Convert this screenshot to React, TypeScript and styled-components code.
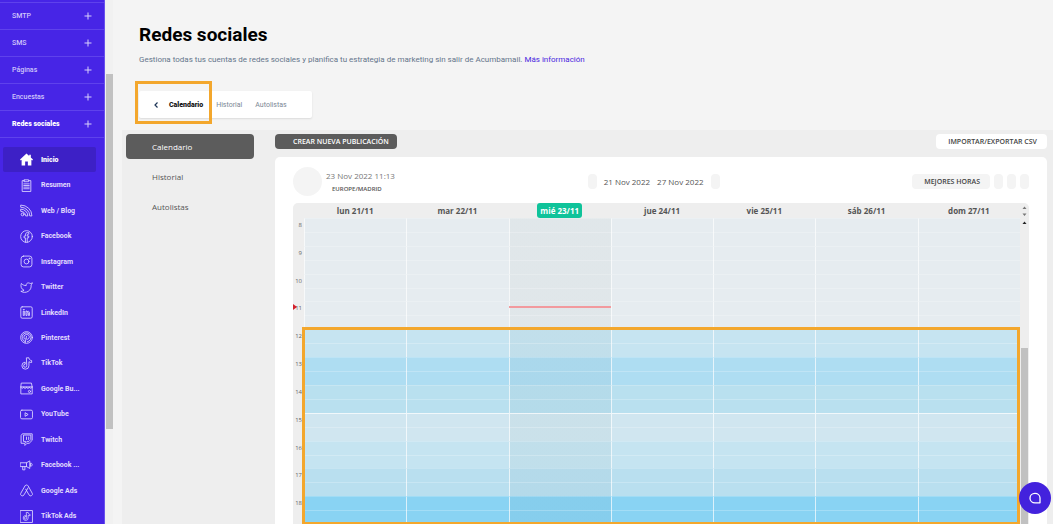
import React from "react";
import styled, { createGlobalStyle } from "styled-components";

const purple = "#4725e6";
const orange = "#f3a72d";
const uiFont = '"Open Sans", "Noto Sans", sans-serif';

const GlobalStyle = createGlobalStyle`
  * { box-sizing: border-box; }
  body { margin: 0; background: #f4f4f4; font-family: Roboto, sans-serif; }
  button { border: 0; margin: 0; padding: 0; font: inherit; cursor: pointer; }
  a { text-decoration: none; }
  ul, h1, p { margin: 0; padding: 0; list-style: none; }
`;

const Page = styled.div`
  display: flex;
  height: 100vh;
  overflow: hidden;
`;

/* ---------- sidebar ---------- */
const Sidebar = styled.nav`
  flex: 0 0 105px;
  background: ${purple};
  border-right: 1px solid #6a50ee;
  padding-top: 2px;
  overflow: hidden;
`;

const SectionButton = styled.button<{ $active?: boolean }>`
  display: flex;
  align-items: center;
  justify-content: space-between;
  width: 100%;
  height: 27px;
  padding: 0 12px;
  background: none;
  border-top: 1px solid #5f42ec;
  color: ${(p) => (p.$active ? "#fff" : "#cfc5fb")};
  font-size: 7px;
  font-weight: ${(p) => (p.$active ? 900 : 500)};
  svg { width: 8px; height: 8px; }
`;

const NetworkList = styled.ul`
  display: grid;
  grid-auto-rows: 1fr;
  height: 392px;
  padding: 9px 8px 0 3px;
  border-top: 1px solid #5f42ec;
`;

const NetworkLink = styled.a<{ $active?: boolean }>`
  display: flex;
  align-items: center;
  gap: 8px;
  height: 100%;
  padding-left: 17px;
  border-radius: 2px;
  background: ${(p) => (p.$active ? "#3d20c6" : "none")};
  color: ${(p) => (p.$active ? "#fff" : "#e2dcfd")};
  font-size: 7px;
  font-weight: ${(p) => (p.$active ? 900 : 700)};
  white-space: nowrap;
  svg { width: 13px; height: 13px; flex: none; }
`;

const PageScroll = styled.div`
  flex: 0 0 8px;
  display: flex;
  flex-direction: column;
  background: #f1f1f1;
  padding: 74px 0 0 1px;
`;

const PageThumb = styled.div`
  height: 355px;
  background: #c1c1c1;
`;

/* ---------- page head ---------- */
const Main = styled.main`
  flex: 1;
  min-width: 0;
  display: flex;
  flex-direction: column;
  padding-left: 9px;
`;

const Head = styled.header`
  padding: 22px 17px 12px;
`;

const Title = styled.h1`
  font-size: 19px;
  line-height: 25px;
  font-weight: 700;
  color: #000;
`;

const Intro = styled.p`
  margin-top: 7px;
  font-size: 8px;
  line-height: 12px;
  color: #64748b;
  a { color: #4a26df; }
`;

const TabBar = styled.div`
  position: relative;
  display: inline-flex;
  align-items: center;
  gap: 13px;
  height: 27px;
  margin-top: 25px;
  padding: 0 25px 0 14px;
  background: #fff;
  border-radius: 2px;
  box-shadow: 0 1px 2px rgba(0, 0, 0, 0.1);
`;

const Back = styled.button`
  display: flex;
  width: 6px;
  background: none;
  margin-right: -3px;
  svg { width: 6px; height: 8px; }
`;

const Tab = styled.button<{ $active?: boolean }>`
  background: none;
  font-size: 7px;
  font-weight: ${(p) => (p.$active ? 900 : 400)};
  color: ${(p) => (p.$active ? "#111" : "#7b8794")};
`;

const TabMarker = styled.div`
  position: absolute;
  left: -4px;
  top: -10px;
  width: 77px;
  height: 43px;
  border: 3px solid ${orange};
`;

/* ---------- planner ---------- */
const Planner = styled.section`
  flex: 1;
  min-height: 0;
  display: flex;
  gap: 21px;
  padding: 4px 6px 0 4px;
  background: #eee;
  font-family: ${uiFont};
`;

const SideMenu = styled.ul`
  flex: 0 0 128px;
  display: flex;
  flex-direction: column;
  gap: 5px;
`;

const SideLink = styled.a<{ $active?: boolean }>`
  display: flex;
  align-items: center;
  height: 25px;
  padding-left: 26px;
  border-radius: 4px;
  font-size: 8px;
  background: ${(p) => (p.$active ? "#5c5c5c" : "none")};
  color: ${(p) => (p.$active ? "#fff" : "#555")};
`;

const Board = styled.div`
  flex: 1;
  min-width: 0;
  display: flex;
  flex-direction: column;
  gap: 8px;
`;

const Row = styled.div`
  display: flex;
  align-items: center;
  justify-content: space-between;
`;

const Action = styled.button<{ $tone: "dark" | "white" | "soft" }>`
  height: 15px;
  padding: ${(p) => (p.$tone === "dark" ? "0 8px 0 18px" : "0 10px 0 12px")};
  border-radius: 4px;
  font-size: 7px;
  line-height: 15px;
  font-weight: 600;
  white-space: nowrap;
  background: ${(p) => ({ dark: "#5c5c5c", white: "#fff", soft: "#f4f4f4" })[p.$tone]};
  color: ${(p) => (p.$tone === "dark" ? "#fff" : "#444")};
`;

const Card = styled.div`
  flex: 1;
  min-height: 0;
  padding: 10px 18px 0;
  background: #fff;
  border-radius: 5px 5px 0 0;
`;

const Account = styled.div`
  display: flex;
  align-items: center;
  gap: 4px;
  height: 29px;
`;

const Avatar = styled.div`
  width: 29px;
  height: 29px;
  border-radius: 50%;
  background: #f4f4f4;
`;

const Clock = styled.div`
  font-size: 8px;
  line-height: 14px;
  color: #777;
`;

const Zone = styled.div`
  padding-left: 6px;
  font-size: 6px;
  line-height: 12px;
  font-weight: 600;
  color: #555;
`;

const Range = styled.div`
  display: flex;
  align-items: center;
  gap: 7px;
  font-size: 8px;
  color: #555;
`;

const Tools = styled.div`
  display: flex;
  align-items: center;
  gap: 4px;
`;

const Pill = styled.button`
  width: 9px;
  height: 15px;
  border-radius: 4px;
  background: #f4f4f4;
`;

/* ---------- week ---------- */
const Week = styled.div`
  position: relative;
  display: flex;
  margin-top: 7px;
  border-radius: 5px 5px 0 0;
  background: #eee;
`;

const Grid = styled.table`
  flex: 1;
  display: block;
  tr {
    display: grid;
    grid-template-columns: 11px repeat(7, 1fr);
  }
  th, td { padding: 0; }
`;

const WeekHead = styled.thead`
  display: block;
`;

const DayHead = styled.th<{ $today?: boolean }>`
  height: 15px;
  font-size: 8px;
  line-height: 15px;
  color: #555;
  span {
    display: inline-block;
    padding: 0 3px;
    border-radius: 3px;
    color: ${(p) => (p.$today ? "#fff" : "inherit")};
    background: ${(p) => (p.$today ? "#0fc39a" : "none")};
  }
`;

const Hours = styled.tbody`
  display: grid;
  grid-auto-rows: 1fr;
  height: 306px;
`;

const Hour = styled.th`
  padding: 2px 2px 0 0 !important;
  font-size: 6px;
  line-height: 10px;
  font-weight: 400;
  text-align: right;
  color: #666;
`;

const Slot = styled.td<{ $fill: string; $today?: boolean; $strong?: boolean }>`
  border-left: 1px solid rgba(255, 255, 255, 0.7);
  border-top: 1px solid rgba(255, 255, 255, ${(p) => (p.$strong ? 0.7 : 0.2)});
  background-color: ${(p) => p.$fill};
  background-image: linear-gradient(
      transparent 13px,
      rgba(255, 255, 255, 0.22) 13px,
      rgba(255, 255, 255, 0.22) 14px,
      transparent 14px
    ),
    linear-gradient(
      rgba(40, 60, 60, ${(p) => (p.$today ? 0.03 : 0)}),
      rgba(40, 60, 60, ${(p) => (p.$today ? 0.03 : 0)})
    );
`;

const NowLine = styled.div`
  position: absolute;
  top: 103px;
  left: calc(11px + (100% - 20px) * 2 / 7);
  width: calc((100% - 20px) / 7);
  height: 2px;
  background: #f29a9e;
`;

const NowArrow = styled.div`
  position: absolute;
  top: 101px;
  left: 0;
  border: 3px solid transparent;
  border-left: 4px solid #d3202b;
  border-right: 0;
`;

const RangeMarker = styled.div`
  position: absolute;
  inset: 124px 9px 0 9px;
  border: 3px solid ${orange};
  border-bottom-width: 2px;
`;

const WeekScroll = styled.div`
  flex: 0 0 9px;
  display: flex;
  flex-direction: column;
  justify-content: space-between;
  align-items: center;
  padding-top: 3px;
  svg { width: 5px; height: 18px; }
`;

const WeekThumb = styled.div`
  width: 7px;
  height: 176px;
  background: #c1c1c1;
`;

const Chat = styled.button`
  position: fixed;
  right: 2px;
  bottom: 10px;
  display: flex;
  align-items: center;
  justify-content: center;
  width: 32px;
  height: 32px;
  border-radius: 50%;
  background: #4322dd;
  svg { width: 14px; height: 14px; }
`;

const Line = ({ children }: { children: React.ReactNode }) => (
  <svg viewBox="0 0 24 24" fill="none" stroke="#ddd6ff" strokeWidth="1.6" strokeLinejoin="round" strokeLinecap="round" aria-hidden="true">
    {children}
  </svg>
);

const note = "M12.500 1.500h4c.3 3 2 4.800 5 5.100v3.600c-1.900 0-3.500-.5-5-1.500v7.300a6.500 6.500 0 1 1-7-6.500v3.700a2.900 2.900 0 1 0 3 2.800z";

const networks: [string, React.ReactNode][] = [
  ["Inicio", <svg viewBox="0 0 24 24" aria-hidden="true"><path fill="#fff" d="M12 1 0 12.200l1.500 1.500L3 12.400V23h6.500v-7.500h5V23H21V12.400l1.500 1.300 1.500-1.500-4-3.700V3h-3v2.700z" /></svg>],
  ["Resumen", <Line><path d="M8 3H4v20h16V3h-4M8 1.500h8V5H8zM7 9h10M7 12h10M7 15h10M7 18h10" /></Line>],
  ["Web / Blog", <Line><path d="M2 2a20 20 0 0 1 20 20h-4A16 16 0 0 0 2 6zM2 9.500A12.500 12.500 0 0 1 14.500 22h-4A8.500 8.500 0 0 0 2 13.500z" /><circle cx="4.800" cy="19.200" r="2.600" /></Line>],
  ["Facebook", <Line><circle cx="12" cy="12" r="10.800" /><path d="M10 22.500V14.500H7.500v-3.200H10V9c0-2.800 1.500-4.300 4-4.300h2.300v3h-1.500c-1.200 0-1.500.6-1.500 1.500v2.100h3l-.5 3.200h-2.500v8" /></Line>],
  ["Instagram", <Line><rect x="2" y="2" width="20" height="20" rx="4.500" /><circle cx="12" cy="12" r="4.500" /><circle cx="17.500" cy="6.500" r=".8" /></Line>],
  ["Twitter", <Line><path d="M22.500 4s-.7 2.100-2 3.400c1.600 10-9.400 17.300-19 11.600 2.200.1 4.400-.6 6-2C2.500 15.500.5 9.600 2.500 4.500c2.200 2.600 5.600 4.100 9 4-.9-4.200 4-6.600 7-3.800 1.600 0 4-.7 4-.7z" /></Line>],
  ["LinkedIn", <Line><rect x="1.500" y="1.500" width="21" height="21" rx="2.500" /><path d="M6 10v7.500h2V10zM6 6.500h2M11 10v7.500h2V13c0-2 2.500-2 2.500 0v4.500h2V12.500c0-3-3-3.500-4.500-1.500v-1z" /></Line>],
  ["Pinterest", <Line><circle cx="12" cy="12" r="10.800" /><path d="M9.500 21.500 12 10M8 14.500C6 11 7.500 6.500 12.300 6.500c4 0 5.700 3 4.500 6-1.200 3.200-4.500 3.700-5.500 1.800M9 19.500a8.300 8.300 0 1 1 4.500.5" /></Line>],
  ["TikTok", <Line><path d={note} /></Line>],
  ["Google Bu...", <Line><path d="M3 2h18l1.500 7v13h-21V9zM1.500 9h21M1.500 9c0 3.500 5.200 3.500 5.200 0 0 3.500 5.300 3.500 5.300 0 0 3.500 5.300 3.500 5.300 0 0 3.500 5.200 3.500 5.200 0" /><circle cx="17.500" cy="17.500" r="2" /></Line>],
  ["YouTube", <Line><rect x="1" y="4" width="22" height="16" rx="2.500" /><path d="m10 9 5 3-5 3z" /></Line>],
  ["Twitch", <Line><path d="M5 1.500h17.500v12L17 19h-4l-4 4v-4H2V5.500zM6.500 4.500v11h4v2.500l2.500-2.500h3.500l3.500-3.500V4.500zM12 7.500v4.500M16 7.500v4.500" /></Line>],
  ["Facebook ...", <Line><path d="M1 7h11l6-3.500v14L12 14H1zM5 14v6h4v-6M20 7.500c3.500 0 3.500 6 0 6zM12 7v7" /></Line>],
  ["Google Ads", <Line><path d="M9.200 3.500 1.500 17a3.300 3.300 0 0 0 5.800 3.200L15 7M9.200 3.500c1.600-2.600 4.600-2 5.800 0L22.500 17a3.300 3.300 0 0 1-5.800 3.200L10.500 9.500" /></Line>],
  ["TikTok Ads", <Line><rect x="1" y="1" width="22" height="22" /><path transform="translate(3.500 3.500) scale(.7)" strokeWidth="2" d={note} /></Line>],
];

const sections = ["SMTP", "SMS", "Páginas", "Encuestas", "Redes sociales"];
const days = ["lun 21/11", "mar 22/11", "mié 23/11", "jue 24/11", "vie 25/11", "sáb 26/11", "dom 27/11"];
const today = 2;
const hours: [number, string][] = [
  [8, "#e6ecf0"],
  [9, "#e6ecf0"],
  [10, "#e6ecf0"],
  [11, "#e6ecf0"],
  [12, "#c6e4f1"],
  [13, "#aeddf2"],
  [14, "#b9e0ef"],
  [15, "#d0e6f0"],
  [16, "#c5e4f1"],
  [17, "#b9dfef"],
  [18, "#89d3f3"],
];

export default function App() {
  return (
    <Page>
      <GlobalStyle />
      <Sidebar>
        {sections.map((name) => (
          <SectionButton key={name} $active={name === "Redes sociales"}>
            {name}
            <svg viewBox="0 0 8 8" stroke="#d8d0fc" aria-hidden="true"><path d="M4 .5v7M.5 4h7" /></svg>
          </SectionButton>
        ))}
        <NetworkList>
          {networks.map(([name, icon], i) => (
            <li key={name}>
              <NetworkLink href="#" $active={i === 0}>{icon}{name}</NetworkLink>
            </li>
          ))}
        </NetworkList>
      </Sidebar>
      <PageScroll><PageThumb /></PageScroll>
      <Main>
        <Head>
          <Title>Redes sociales</Title>
          <Intro>
            Gestiona todas tus cuentas de redes sociales y planifica tu estrategia de marketing sin salir de Acumbamail. <a href="#">Más información</a>
          </Intro>
          <TabBar>
            <Back aria-label="Volver">
              <svg viewBox="0 0 6 8" fill="none" stroke="#1d3557" strokeWidth="1.200" aria-hidden="true"><path d="M4.500 1.500 2 4l2.500 2.500" /></svg>
            </Back>
            <Tab $active>Calendario</Tab>
            <Tab>Historial</Tab>
            <Tab>Autolistas</Tab>
            <TabMarker />
          </TabBar>
        </Head>
        <Planner>
          <SideMenu>
            <li><SideLink href="#" $active>Calendario</SideLink></li>
            <li><SideLink href="#">Historial</SideLink></li>
            <li><SideLink href="#">Autolistas</SideLink></li>
          </SideMenu>
          <Board>
            <Row>
              <Action $tone="dark">CREAR NUEVA PUBLICACIÓN</Action>
              <Action $tone="white">IMPORTAR/EXPORTAR CSV</Action>
            </Row>
            <Card>
              <Row>
                <Account>
                  <Avatar />
                  <div>
                    <Clock>23 Nov 2022 11:13</Clock>
                    <Zone>EUROPE/MADRID</Zone>
                  </div>
                </Account>
                <Range>
                  <Pill aria-label="Semana anterior" />
                  <span>21 Nov 2022</span>
                  <span>27 Nov 2022</span>
                  <Pill aria-label="Semana siguiente" />
                </Range>
                <Tools>
                  <Action $tone="soft">MEJORES HORAS</Action>
                  <Pill aria-label="Vista" />
                  <Pill aria-label="Filtro" />
                  <Pill aria-label="Ajustes" />
                </Tools>
              </Row>
              <Week>
                <Grid>
                  <WeekHead>
                    <tr>
                      <td />
                      {days.map((d, i) => (
                        <DayHead key={d} $today={i === today}><span>{d}</span></DayHead>
                      ))}
                    </tr>
                  </WeekHead>
                  <Hours>
                    {hours.map(([h, fill]) => (
                      <tr key={h}>
                        <Hour>{h}</Hour>
                        {days.map((d, i) => (
                          <Slot key={d} $fill={fill} $today={i === today} $strong={h === 15} />
                        ))}
                      </tr>
                    ))}
                  </Hours>
                </Grid>
                <WeekScroll>
                  <svg viewBox="0 0 5 18" aria-hidden="true">
                    <path fill="#777" d="M.5 3 2.500.5 4.500 3zM.5 7.500h4L2.500 10z" />
                    <path fill="#222" d="M.5 18l2-2.500 2 2.500z" />
                  </svg>
                  <WeekThumb />
                </WeekScroll>
                <NowLine />
                <NowArrow />
                <RangeMarker />
              </Week>
            </Card>
          </Board>
        </Planner>
      </Main>
      <Chat aria-label="Chat">
        <svg viewBox="0 0 14 14" fill="none" stroke="#fff" strokeWidth="1.300" strokeLinejoin="round" aria-hidden="true">
          <path d="M12 11.800H7a5 4.700 0 1 1 5-4.800v2.500z" />
        </svg>
      </Chat>
    </Page>
  );
}
